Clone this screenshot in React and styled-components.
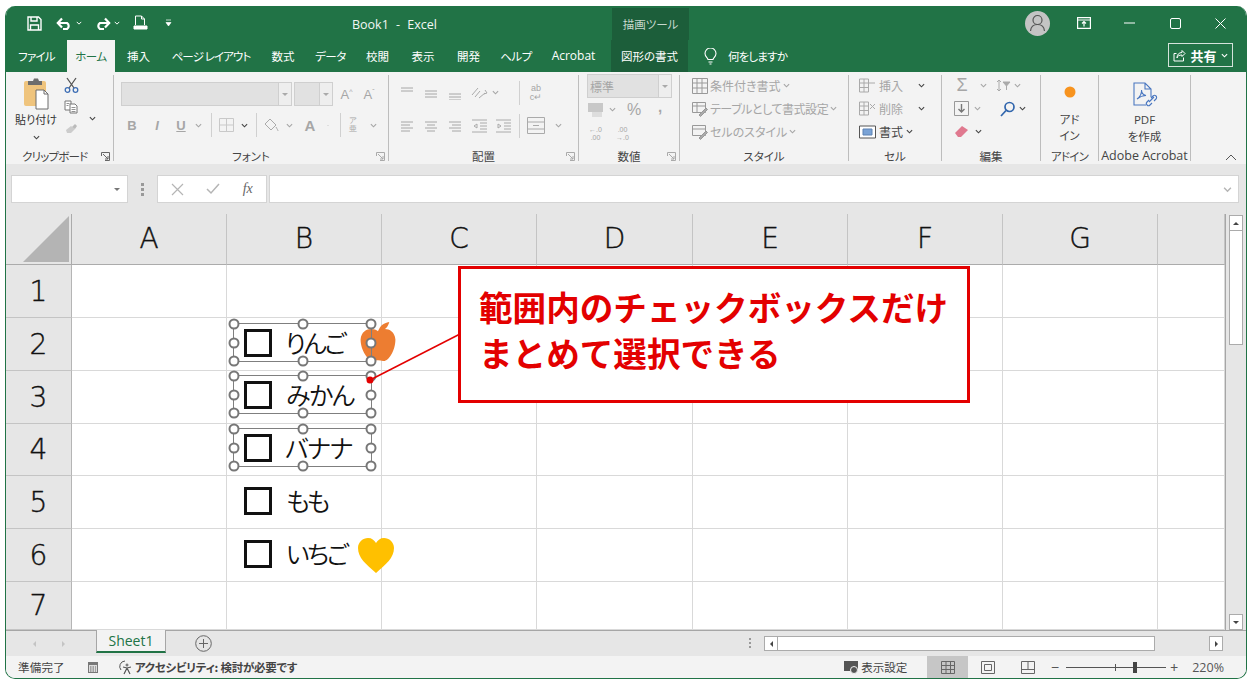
import styled, { createGlobalStyle } from 'styled-components';

const GlobalStyle = createGlobalStyle`
  html, body { margin: 0; padding: 0; background: #fff; }
  body { font-family: "Noto Sans CJK JP", "Liberation Sans", sans-serif; font-feature-settings: "palt"; }
  * { box-sizing: border-box; }
`;

const GREEN = '#217346';
const RED = '#e30000';

const Window = styled.div`
  width: 1242px;
  height: 673px;
  margin: 6px 0 0 5px;
  border-radius: 10px;
  overflow: hidden;
  display: flex;
  flex-direction: column;
  border: 1px solid ${GREEN};
  border-top: none;
  position: relative;
`;

const TitleBar = styled.div`
  height: 34px;
  background: ${GREEN};
  color: #fff;
  display: flex;
  align-items: center;
  font-size: 12px;
  flex: none;
`;

const Qat = styled.div`
  display: flex;
  align-items: center;
  width: 346px;
  padding-left: 21px;
  gap: 0;
`;

const QatSlot = styled.span`
  display: flex;
  align-items: center;
  width: ${p => p.$w}px;
`;

const DocTitle = styled.div`
  width: 260px;
  padding-top: 3px;
  font-family: "Open Sans", "Liberation Sans", sans-serif;
  font-size: 12.5px;
  word-spacing: 4px;
  color: #f2f7f4;
`;

const ToolContext = styled.div`
  width: 77px;
  height: 32px;
  margin-top: 2px;
  background: #1c5e3a;
  color: #c7d8ce;
  font-size: 11.5px;
  display: flex;
  align-items: center;
  justify-content: center;
`;

const WinControls = styled.div`
  display: flex;
  align-items: center;
  margin-left: auto;
  padding-right: 0;
`;

const Avatar = styled.div`
  width: 25px;
  height: 25px;
  border-radius: 50%;
  background: #c4c4c4;
  display: flex;
  align-items: center;
  justify-content: center;
  margin-right: 15px;
`;

const WinBtn = styled.span`
  display: flex;
  width: ${p => p.$w || 45}px;
  justify-content: center;
`;

const TabRow = styled.div`
  height: 32px;
  background: ${GREEN};
  color: #fff;
  display: flex;
  align-items: stretch;
  font-size: 11.5px;
  flex: none;
`;

const Tab = styled.div`
  width: ${p => p.$w}px;
  margin-left: ${p => p.$ml || 0}px;
  display: flex;
  align-items: center;
  justify-content: center;
  white-space: nowrap;
  letter-spacing: ${p => p.$ls || 0}px;
  background: ${p => p.$active ? '#f3f3f3' : p.$dark ? '#1c5e3a' : 'transparent'};
  color: ${p => p.$active ? GREEN : '#fff'};
  padding-bottom: ${p => p.$active ? 0 : 1}px;
`;

const AcrobatTab = styled(Tab)`
  font-family: "Open Sans", "Liberation Sans", sans-serif;
  font-size: 12px;
`;

const TellMe = styled.div`
  display: flex;
  align-items: center;
  margin-left: 16px;
  gap: 11px;
  font-size: 11.5px;
  letter-spacing: -0.8px;
`;

const ShareBtn = styled.div`
  margin-left: auto;
  margin-right: 13px;
  align-self: center;
  width: 65px;
  height: 24px;
  margin-top: -2px;
  border: 1px solid #d5e3db;
  display: flex;
  align-items: center;
  justify-content: center;
  gap: 4px;
  font-size: 13px;
  font-weight: 700;
`;

const Ribbon = styled.div`
  height: 92px;
  background: #f3f3f3;
  display: flex;
  flex: none;
  padding-top: 3px;
`;

const Group = styled.div`
  width: ${p => p.$w}px;
  height: 86px;
  border-right: ${p => p.$noline ? 'none' : '1px solid #bdbdbd'};
  display: flex;
  flex-direction: column;
  position: relative;
  flex: none;
`;

const GroupBody = styled.div`
  flex: 1;
  display: flex;
  min-height: 0;
  padding-left: ${p => p.$pl || 0}px;
  gap: ${p => p.$gap || 0}px;
`;

const GroupLabel = styled.div`
  height: 18px;
  margin-bottom: -4px;
  font-size: 11.5px;
  line-height: 18px;
  text-align: center;
  color: #444;
  white-space: nowrap;
  letter-spacing: ${p => p.$ls || 0}px;
`;

const ClipLabel = styled(GroupLabel)`
  text-align: left;
  padding-left: 16px;
`;

const Launcher = styled.svg`
  position: absolute;
  right: 3px;
  bottom: 0;
  width: 9px;
  height: 9px;
`;

const PasteCol = styled.div`
  width: 42px;
  margin-left: 9px;
  display: flex;
  flex-direction: column;
  align-items: center;
  font-size: 11px;
  color: #333;
  line-height: 14px;
  white-space: nowrap;
`;

const PasteIcon = styled.svg`
  margin: 3px 0 2px;
`;

const PasteChev = styled.span`
  margin-top: 3px;
`;

const ClipCol = styled.div`
  width: 22px;
  margin-left: 3px;
  display: flex;
  flex-direction: column;
  align-items: center;
  gap: 7px;
  padding-top: 2px;
`;

const ClipChev = styled.span`
  margin: 28px 0 0 7px;
`;

const Stack = styled.div`
  display: flex;
  flex-direction: column;
  gap: ${p => p.$gap || 0}px;
  padding-top: ${p => p.$pt || 0}px;
  margin-top: ${p => p.$mt || 0}px;
`;

const Row = styled.div`
  display: flex;
  align-items: center;
  height: ${p => p.$h || 23}px;
  gap: ${p => p.$gap || 0}px;
  padding-left: ${p => p.$pl || 0}px;
  color: ${p => p.$dark ? '#444' : '#a6a6a6'};
  font-size: 12px;
  white-space: nowrap;
`;

const Cell = styled.span`
  display: flex;
  align-items: center;
  justify-content: center;
  flex: none;
  width: ${p => p.$w}px;
`;

const Gap = styled.span`
  width: ${p => p.$w}px;
  flex: none;
`;

const Combo = styled.div`
  width: ${p => p.$w}px;
  height: 24px;
  background: #e1e1e1;
  border: 1px solid #cfcfcf;
  display: flex;
  align-items: center;
  justify-content: flex-end;
  margin-right: ${p => p.$mr || 0}px;
  margin-top: ${p => p.$mt || 0}px;
  color: #a6a6a6;
  font-size: 12px;
  flex: none;
`;

const ComboText = styled.span`
  margin-right: auto;
  padding-left: 2px;
`;

const ComboArrow = styled.span`
  width: 13px;
  height: 100%;
  border-left: 1px solid #cfcfcf;
  background: #eee;
  display: flex;
  align-items: center;
  justify-content: center;
`;

const VLine = styled.span`
  width: 1px;
  height: 24px;
  background: #d0d0d0;
  flex: none;
`;

const FontBtn = styled.span`
  width: ${p => p.$w}px;
  flex: none;
  text-align: center;
  color: #a6a6a6;
  font-family: "Liberation Sans", sans-serif;
  font-size: ${p => p.$size || 13}px;
  line-height: ${p => p.$lh ? `${p.$lh}px` : 'normal'};
  font-weight: ${p => p.$bold ? 700 : 400};
  font-style: ${p => p.$italic ? 'italic' : 'normal'};
  text-decoration: ${p => p.$under ? 'underline' : 'none'};
  margin-left: ${p => p.$ml || 0}px;
  margin-top: ${p => p.$mt || 0}px;
`;

const Caret = styled.sup`
  font-size: 7px;
`;

const TallBtn = styled.div`
  width: ${p => p.$w}px;
  display: flex;
  flex-direction: column;
  align-items: center;
  padding-top: ${p => p.$pt || 0}px;
  font-size: 11.5px;
  line-height: 16px;
  color: #444;
  text-align: center;
`;

const AddinDot = styled.svg`
  margin-bottom: 13px;
`;

const PdfIcon = styled.svg`
  margin-bottom: 3px;
`;

const PdfText = styled.span`
  font-family: "Open Sans", "Liberation Sans", sans-serif;
  font-size: 11.5px;
`;

const AcrobatLabel = styled(GroupLabel)`
  font-family: "Open Sans", "Liberation Sans", sans-serif;
  font-size: 12.5px;
`;

const Tight = styled.span`
  letter-spacing: -0.45px;
`;

const CollapseWrap = styled.div`
  flex: 1;
  display: flex;
  align-items: flex-end;
  justify-content: flex-end;
  padding: 0 9px 0 0;
  height: 86px;
`;

const FormulaBar = styled.div`
  height: 50px;
  background: #e6e6e6;
  display: flex;
  align-items: flex-start;
  padding: 11px 0 0 5px;
  flex: none;
`;

const NameBox = styled.div`
  width: 117px;
  height: 28px;
  background: #fff;
  border: 1px solid #d4d4d4;
  display: flex;
  align-items: center;
  justify-content: flex-end;
  padding-right: 6px;
`;

const Dots = styled.div`
  width: 29px;
  height: 28px;
  display: flex;
  align-items: center;
  justify-content: center;
`;

const FxBox = styled.div`
  width: 110px;
  height: 28px;
  background: #fff;
  border: 1px solid #d4d4d4;
  display: flex;
  align-items: center;
  justify-content: space-around;
  padding: 0 2px;
  margin-right: 2px;
`;

const FxText = styled.span`
  font-family: "Liberation Serif", serif;
  font-style: italic;
  font-size: 14px;
  color: #666;
`;

const FormulaInput = styled.div`
  width: 970px;
  height: 28px;
  background: #fff;
  border: 1px solid #d4d4d4;
  display: flex;
  align-items: center;
  justify-content: flex-end;
  padding-right: 6px;
`;

const SheetWrap = styled.div`
  display: flex;
  height: 417px;
  flex: none;
  border-bottom: 1px solid #a6a6a6;
`;

const Sheet = styled.div`
  position: relative;
  width: 1219px;
  display: grid;
  grid-template-columns: 66px 155px 155px 155px 156px 155px 155px 155px 67px;
  grid-template-rows: 51px 53px 53px 53px 52px 53px 53px 48px;
  background: #fff;
  overflow: hidden;
`;

const Corner = styled.div`
  background: #e6e6e6;
  border-right: 1px solid #ababab;
  border-bottom: 1px solid #ababab;
  display: flex;
  align-items: flex-end;
  justify-content: flex-end;
  padding: 0 2px 2px 0;
`;

const ColHead = styled.div`
  background: #e6e6e6;
  border-right: 1px solid #c4c4c4;
  border-bottom: 1px solid #ababab;
  display: flex;
  align-items: center;
  justify-content: center;
  padding-bottom: 2px;
  font-family: "DejaVu Sans", sans-serif;
  font-weight: 200;
  font-size: 28px;
  color: #111;
  -webkit-text-stroke: 0.4px #111;
`;

const RowHead = styled.div`
  background: #e6e6e6;
  border-right: 1px solid #b5b5b5;
  border-bottom: 1px solid #c4c4c4;
  display: flex;
  align-items: center;
  justify-content: center;
  font-family: "DejaVu Sans", sans-serif;
  font-weight: 200;
  font-size: 28px;
  color: #111;
  -webkit-text-stroke: 0.4px #111;
`;

const GridCell = styled.div`
  border-right: 1px solid #d9d9d9;
  border-bottom: 1px solid #d9d9d9;
`;

const CheckItem = styled.div`
  position: absolute;
  left: 238px;
  top: ${p => p.$top}px;
  display: flex;
  align-items: center;
  height: 28px;
  font-size: 25px;
  letter-spacing: ${p => p.$ls || 0}px;
  color: #111;
  white-space: nowrap;
  font-weight: 350;
  padding-bottom: 2px;
`;

const CheckBox = styled.span`
  width: 28px;
  height: 28px;
  margin-bottom: -2px;
  border: 3px solid #111;
  margin-right: ${p => p.$gap || 13}px;
  flex: none;
`;

const Selection = styled.div`
  position: absolute;
  left: 227px;
  top: ${p => p.$top}px;
  width: 139px;
  height: 39px;
  border: 1px solid #7f7f7f;
`;

const Handle = styled.span`
  position: absolute;
  width: 11px;
  height: 11px;
  border-radius: 50%;
  background: #fff;
  border: 2px solid #777;
  left: ${p => p.$x}%;
  top: ${p => p.$y}%;
  transform: translate(-50%, -50%);
`;

const Floating = styled.svg`
  position: absolute;
  left: ${p => p.$x}px;
  top: ${p => p.$y}px;
`;

const Callout = styled.div`
  position: absolute;
  left: 452px;
  top: 52px;
  width: 512px;
  height: 137px;
  background: #fff;
  border: 3px solid ${RED};
  color: ${RED};
  font-size: 33.6px;
  font-weight: 700;
  line-height: 46px;
  padding: 15px 0 0 18px;
  font-feature-settings: normal;
  white-space: nowrap;
`;

const ScrollCol = styled.div`
  width: 21px;
  background: #e6e6e6;
  border-left: 1px solid #a6a6a6;
  display: flex;
  flex-direction: column;
  align-items: center;
  padding-top: 1px;
`;

const ScrollBtn = styled.div`
  width: 14px;
  height: 16px;
  background: #fff;
  border: 1px solid #ababab;
  display: flex;
  align-items: center;
  justify-content: center;
  flex: none;
  margin-top: ${p => p.$auto ? 'auto' : 0};
`;

const ScrollThumb = styled.div`
  width: 14px;
  height: 114px;
  background: #fff;
  border: 1px solid #ababab;
  border-top: none;
`;

const TabStrip = styled.div`
  height: 25px;
  background: #e6e6e6;
  display: flex;
  align-items: flex-start;
  flex: none;
`;

const TabNav = styled.div`
  width: 90px;
  height: 25px;
  display: flex;
  align-items: center;
  gap: 21px;
  padding-left: 24px;
`;

const SheetTab = styled.div`
  width: 70px;
  height: 23px;
  margin-top: -1px;
  background: #f3f3f3;
  border: 1px solid #a6a6a6;
  border-top: none;
  border-bottom: 2px solid ${GREEN};
  color: ${GREEN};
  font-family: "Open Sans", "Liberation Sans", sans-serif;
  font-size: 14px;
  display: flex;
  align-items: center;
  justify-content: center;
`;

const AddSheet = styled.div`
  margin-left: 29px;
  height: 25px;
  display: flex;
  align-items: center;
`;

const HScroll = styled.div`
  margin-left: auto;
  height: 25px;
  display: flex;
  align-items: center;
  padding-right: 23px;
`;

const Grip = styled.div`
  width: 16px;
  display: flex;
  justify-content: center;
  margin-right: 6px;
`;

const HBtn = styled.div`
  width: 14px;
  height: 15px;
  background: #fff;
  border: 1px solid #ababab;
  display: flex;
  align-items: center;
  justify-content: center;
`;

const HThumb = styled.div`
  width: 377px;
  height: 15px;
  background: #fff;
  border: 1px solid #ababab;
  border-left: none;
  margin-right: 54px;
`;

const StatusBar = styled.div`
  flex: 1;
  background: #f3f3f3;
  display: flex;
  align-items: center;
  font-size: 11.5px;
  color: #444;
  padding-left: 12px;
`;

const StatusText = styled.span`
  font-weight: ${p => p.$bold ? 700 : 400};
  margin-left: ${p => p.$ml || 0}px;
  letter-spacing: ${p => p.$ls || 0}px;
  white-space: nowrap;
`;

const StatusRight = styled.div`
  margin-left: auto;
  display: flex;
  align-items: center;
  height: 100%;
`;

const ViewBtn = styled.div`
  width: ${p => p.$w || 40}px;
  height: 100%;
  display: flex;
  align-items: center;
  justify-content: center;
  background: ${p => p.$on ? '#c6c6c6' : 'transparent'};
`;

const ZoomBar = styled.div`
  width: 100px;
  height: 1px;
  background: #555;
  position: relative;
  margin: 0 1px 0 4px;
`;

const ZoomTick = styled.span`
  position: absolute;
  left: 49px;
  top: -3px;
  width: 1px;
  height: 7px;
  background: #555;
`;

const ZoomThumb = styled.span`
  position: absolute;
  left: 67px;
  top: -5px;
  width: 4px;
  height: 11px;
  background: #444;
`;

const ZoomSign = styled.span`
  width: 14px;
  margin-left: ${p => p.$ml || 0}px;
  text-align: center;
  font-size: 14px;
  color: #555;
`;

const ZoomValue = styled.span`
  font-family: "Open Sans", "Liberation Sans", sans-serif;
  font-size: 12.5px;
  color: #555;
  margin: 0 22px 0 11px;
`;

const Icon = styled.svg`
  margin-left: ${p => p.$ml || 0}px;
  margin-right: ${p => p.$mr || 0}px;
  flex: none;
`;

const Chev = ({ c = '#a6a6a6', s = 7 }) => (
  <svg width={s} height={s} viewBox="0 0 8 8" fill="none" stroke={c} strokeWidth="1.3"><path d="M1 2.5 4 5.5 7 2.5" /></svg>
);

const DarkChev = () => <Chev c="#444" />;

const Tri = ({ dir = 'down', c = '#444' }) => {
  const d = { down: 'M1 3h6L4 6z', up: 'M1 6h6L4 3z', right: 'M3 1v6l3-3z', left: 'M6 1v6L3 4z' }[dir];
  return <svg width="8" height="8" viewBox="0 0 8 8"><path d={d} fill={c} /></svg>;
};

const Lines = ({ rows }) => (
  <svg width="14" height="14" viewBox="0 0 14 14" stroke="#a6a6a6" strokeWidth="1" fill="none">
    {rows.map((r, i) => <path key={i} d={`M${r[0]} ${r[2]}H${r[1]}`} />)}
  </svg>
);

const LaunchIcon = ({ c = '#aaa' }) => (
  <Launcher viewBox="0 0 9 9" fill="none" stroke={c}><path d="M.5 4V.5H8.500V8.500H4M2 2l5 5M7 4v3H4" /></Launcher>
);

const App = () => {
  const cols = ['A', 'B', 'C', 'D', 'E', 'F', 'G', ''];
  const rows = [1, 2, 3, 4, 5, 6, 7];
  const handles = [[0, 0], [50, 0], [100, 0], [0, 50], [100, 50], [0, 100], [50, 100], [100, 100]];

  return (
    <>
      <GlobalStyle />
      <Window>
        <TitleBar>
          <Qat>
            <QatSlot $w={29}>
              <svg width="15" height="15" viewBox="0 0 15 15" fill="none" stroke="#fff" strokeWidth="1.4"><path d="M1 1h10.5L14 3.5V14H1z" /><path d="M4 1v4h6V1M3.5 14V9h8v5" /></svg>
            </QatSlot>
            <QatSlot $w={38}>
              <Icon $mr={3} width="17" height="13" viewBox="0 0 17 13" fill="none" stroke="#fff" strokeWidth="2.2"><path d="M2 6h9a3.5 3.5 0 0 1 0 6H7" /><path d="M6 1.5 1.8 6 6 10.5" /></Icon>
              <Chev c="#fff" s={6} />
            </QatSlot>
            <QatSlot $w={39}>
              <Icon $mr={3} width="17" height="13" viewBox="0 0 17 13" fill="none" stroke="#fff" strokeWidth="2.2"><path d="M15 6H6a3.5 3.5 0 0 0 0 6h4" /><path d="M11 1.5 15.2 6 11 10.5" /></Icon>
              <Chev c="#fff" s={6} />
            </QatSlot>
            <QatSlot $w={32}>
              <svg width="15" height="16" viewBox="0 0 15 16" fill="none" stroke="#fff" strokeWidth="1"><path d="M2.5 10V1h6l3 3v6M8.5 1v3h3" /><path d="M1 11h13v3H1z" fill="#fff" /></svg>
            </QatSlot>
            <QatSlot $w={10}>
              <svg width="7" height="8" viewBox="0 0 7 8"><path d="M1 1h5M1 3.5h5L3.500 7z" stroke="#fff" fill="#fff" strokeWidth=".7" /></svg>
            </QatSlot>
          </Qat>
          <DocTitle>Book1 - Excel</DocTitle>
          <ToolContext>描画ツール</ToolContext>
          <WinControls>
            <Avatar>
              <svg width="17" height="18" viewBox="0 0 17 18" fill="none" stroke="#555" strokeWidth="1.2"><circle cx="8.500" cy="6" r="4.500" /><path d="M1.500 17c.5-5 3-6.500 7-6.500s6.500 1.500 7 6.500" /></svg>
            </Avatar>
            <WinBtn $w={38}>
              <svg width="14" height="12" viewBox="0 0 14 12" fill="none" stroke="#fff" strokeWidth="1.2"><path d="M.6.600h12.800v10.800H.6zM.6 3h12.800" /><path d="M7 9.500V5M5 6.500 7 4.500l2 2" /></svg>
            </WinBtn>
            <WinBtn $w={53}>
              <svg width="11" height="2" viewBox="0 0 11 2"><path d="M0 1h11" stroke="#fff" strokeWidth="1" /></svg>
            </WinBtn>
            <WinBtn $w={39}>
              <svg width="11" height="11" viewBox="0 0 11 11" fill="none" stroke="#fff" strokeWidth="1"><rect x=".5" y=".5" width="10" height="10" rx="1.500" /></svg>
            </WinBtn>
            <WinBtn $w={51}>
              <svg width="11" height="11" viewBox="0 0 11 11" stroke="#fff" strokeWidth="1"><path d="M.5.500l10 10M10.500.500l-10 10" /></svg>
            </WinBtn>
          </WinControls>
        </TitleBar>

        <TabRow>
          <Tab $w={61} $ls={-0.8}>ファイル</Tab>
          <Tab $w={48} $active $ls={-0.4}>ホーム</Tab>
          <Tab $w={47}>挿入</Tab>
          <Tab $w={98} $ls={-0.9}>ページ レイアウト</Tab>
          <Tab $w={46}>数式</Tab>
          <Tab $w={49} $ls={-0.4}>データ</Tab>
          <Tab $w={45}>校閲</Tab>
          <Tab $w={46}>表示</Tab>
          <Tab $w={45}>開発</Tab>
          <Tab $w={50} $ls={-0.4}>ヘルプ</Tab>
          <AcrobatTab $w={65}>Acrobat</AcrobatTab>
          <Tab $w={77} $ml={5} $dark>図形の書式</Tab>
          <TellMe>
            <svg width="13" height="17" viewBox="0 0 13 17" fill="none" stroke="#fff" strokeWidth="1.1"><path d="M4 11.500C3.500 9.500 1 8.500 1 5.500a5.500 5.500 0 0 1 11 0c0 3-2.500 4-3 6zM4.500 14h4M5.500 16h2" /></svg>
            <span>何をしますか</span>
          </TellMe>
          <ShareBtn>
            <svg width="13" height="13" viewBox="0 0 13 13" fill="none" stroke="#fff" strokeWidth="1"><path d="M9 1.500 12 4.500 9 7.500V6C6 6 4.500 7 4 9c0-3.500 2-5.500 5-5.500zM10.500 8.500V12H1V4.500h2.500" /></svg>
            <span>共有</span>
            <Chev c="#fff" s={7} />
          </ShareBtn>
        </TabRow>

        <Ribbon>
          <Group $w={108}>
            <GroupBody>
              <PasteCol>
                <PasteIcon width="26" height="32" viewBox="0 0 26 32">
                  <rect x="1" y="3" width="22" height="25" rx="2" fill="#efc47d" />
                  <path d="M7 3h3l1-2.500h4L16 3h3v4H5V3z" fill="#6d6d6d" />
                  <path d="M13 12h8l4 4v15H13z" fill="#fff" stroke="#6d6d6d" />
                  <path d="M21 12v4h4" fill="none" stroke="#6d6d6d" />
                </PasteIcon>
                <span>貼り付け</span>
                <PasteChev><DarkChev /></PasteChev>
              </PasteCol>
              <ClipCol>
                <svg width="15" height="16" viewBox="0 0 15 16" fill="none" strokeWidth="1.3"><path d="M3 1l7 10M12 1 5 11" stroke="#555" /><circle cx="3.500" cy="13" r="2.300" stroke="#3f6fb5" /><circle cx="11.500" cy="13" r="2.300" stroke="#3f6fb5" /></svg>
                <svg width="14" height="14" viewBox="0 0 14 14" fill="#fff" stroke="#777" strokeWidth="1"><path d="M1 1h6v9H1z" /><path d="M6 4h5l2 2v7H6z" /><path d="M2.500 3.500h3M2.500 5.500h2M7.500 7.500h4M7.500 9.500h4M7.500 11.500h4" strokeWidth=".8" /></svg>
                <svg width="14" height="14" viewBox="0 0 14 14"><path d="M2 9l5-4 4 3-4 4H3z" fill="#ccc" /><path d="M8 6l3-3 2 2-2 3z" fill="#bbb" /></svg>
              </ClipCol>
              <ClipChev><DarkChev /></ClipChev>
            </GroupBody>
            <ClipLabel $ls={-0.8}>クリップボード</ClipLabel>
            <LaunchIcon c="#666" />
          </Group>

          <Group $w={275}>
            <GroupBody $pl={7}>
              <Stack $pt={7} $gap={7}>
                <Row $h={24}>
                  <Combo $w={171} $mr={2}><ComboArrow><Tri c="#aaa" /></ComboArrow></Combo>
                  <Combo $w={39}><ComboArrow><Tri c="#aaa" /></ComboArrow></Combo>
                  <FontBtn $w={25} $ml={1}>A<Caret>^</Caret></FontBtn>
                  <FontBtn $w={20}>A<Caret>ˇ</Caret></FontBtn>
                </Row>
                <Row $h={24}>
                  <FontBtn $w={22} $bold>B</FontBtn>
                  <FontBtn $w={28} $italic $bold>I</FontBtn>
                  <FontBtn $w={20} $bold $under>U</FontBtn>
                  <Cell $w={14}><Chev /></Cell>
                  <Gap $w={6} />
                  <VLine />
                  <Cell $w={28}><svg width="15" height="14" viewBox="0 0 15 14" fill="none" stroke="#c9c9c9"><path d="M.5.500h14v13H.5zM7.500.500v13M.5 7h14" /></svg></Cell>
                  <Cell $w={8}><DarkChev /></Cell>
                  <Gap $w={8} />
                  <VLine />
                  <Cell $w={28}><svg width="16" height="15" viewBox="0 0 16 15" fill="none" stroke="#aaa"><path d="M7 1l6 6-5 5-6-6zM13 9c1 2 2 3 2 4" /></svg></Cell>
                  <Cell $w={8}><Chev /></Cell>
                  <FontBtn $w={34} $bold $size={15}>A</FontBtn>
                  <Cell $w={2}><Chev /></Cell>
                  <Gap $w={11} />
                  <VLine />
                  <FontBtn $w={24} $size={8} $lh={8}>ア<br />亜</FontBtn>
                  <Cell $w={16}><Chev /></Cell>
                </Row>
              </Stack>
            </GroupBody>
            <GroupLabel>フォント</GroupLabel>
            <LaunchIcon />
          </Group>

          <Group $w={190}>
            <GroupBody $pl={6}>
              <Stack $pt={6} $gap={10}>
                <Row>
                  <Cell $w={24}><Lines rows={[[1, 13, 2], [1, 13, 5]]} /></Cell>
                  <Cell $w={24}><Lines rows={[[1, 13, 5], [1, 13, 8], [1, 13, 11]]} /></Cell>
                  <Cell $w={24}><Lines rows={[[1, 13, 8], [1, 13, 11], [1, 13, 14]]} /></Cell>
                  <Cell $w={24}><svg width="18" height="14" viewBox="0 0 18 14" fill="none" stroke="#aaa" strokeWidth="1"><path d="M2 9l6-7M5 11l5-6M9 12l6-5M15 4l2 3-3 1" /></svg></Cell>
                  <Cell $w={8}><Chev /></Cell>
                  <Gap $w={20} />
                  <VLine />
                  <FontBtn $w={32} $size={9} $lh={9}>ab<br />c↵</FontBtn>
                </Row>
                <Row>
                  <Cell $w={24}><Lines rows={[[1, 13, 3], [1, 10, 6], [1, 13, 9], [1, 10, 12]]} /></Cell>
                  <Cell $w={24}><Lines rows={[[1, 13, 3], [3, 11, 6], [1, 13, 9], [3, 11, 12]]} /></Cell>
                  <Cell $w={24}><Lines rows={[[1, 13, 3], [4, 13, 6], [1, 13, 9], [4, 13, 12]]} /></Cell>
                  <Cell $w={24}><svg width="15" height="14" viewBox="0 0 15 14" fill="none" stroke="#aaa"><path d="M0 1h15M8 4h7M8 7h7M8 10h7M0 13h15M5 5 2 7l3 2z" /></svg></Cell>
                  <Cell $w={24}><svg width="15" height="14" viewBox="0 0 15 14" fill="none" stroke="#aaa"><path d="M0 1h15M8 4h7M8 7h7M8 10h7M0 13h15M2 5l3 2-3 2z" /></svg></Cell>
                  <Gap $w={4} />
                  <VLine />
                  <Cell $w={32}><svg width="18" height="17" viewBox="0 0 18 17" fill="none" stroke="#aaa"><path d="M.5.500h17v16H.5zM.5 5h17M.5 12h17M6 8.500h6" /></svg></Cell>
                  <Cell $w={12}><Chev /></Cell>
                </Row>
              </Stack>
            </GroupBody>
            <GroupLabel>配置</GroupLabel>
            <LaunchIcon />
          </Group>

          <Group $w={101}>
            <GroupBody $pl={8}>
              <Stack>
                <Combo $w={85} $mt={-1}><ComboText>標準</ComboText><ComboArrow><Tri c="#aaa" /></ComboArrow></Combo>
                <Row $h={23}>
                  <svg width="17" height="16" viewBox="0 0 17 16"><rect x="1" y="1" width="15" height="9" fill="#c8c8c8" /><rect x="5" y="10" width="10" height="5" fill="#ddd" /></svg>
                  <Cell $w={17}><Chev /></Cell>
                  <FontBtn $w={26} $size={16}>%</FontBtn>
                  <FontBtn $w={26} $bold $size={15} $mt={-6}>,</FontBtn>
                </Row>
                <Row $h={26} $gap={10}>
                  <FontBtn $w={17} $size={7} $lh={8}>←.0<br />.00</FontBtn>
                  <FontBtn $w={17} $size={7} $lh={8}>.00<br />→.0</FontBtn>
                </Row>
              </Stack>
            </GroupBody>
            <GroupLabel>数値</GroupLabel>
            <LaunchIcon />
          </Group>

          <Group $w={169}>
            <GroupBody $pl={12}>
              <Stack $mt={-1}>
                <Row $gap={2}>
                  <svg width="16" height="16" viewBox="0 0 16 16" fill="none" stroke="#999"><path d="M.5.500h15v15H.5zM5 .5v15M10 .5v15M.5 5h15M.5 10h15" /></svg>
                  <span>条件付き書式</span><Chev />
                </Row>
                <Row $gap={2}>
                  <svg width="16" height="16" viewBox="0 0 16 16" fill="none" stroke="#999"><path d="M.5 1.500h13v10H.5zM.5 5h13M5 1.500v10" /><path d="M7 14l7-7 1.500 1.500-7 7z" fill="#aaa" /></svg>
                  <Tight>テーブルとして書式設定</Tight><Chev />
                </Row>
                <Row $gap={2}>
                  <svg width="16" height="16" viewBox="0 0 16 16" fill="none" stroke="#999"><path d="M.5 1.500h13v10H.5zM.5 5h13" /><path d="M7 14l7-7 1.500 1.500-7 7z" fill="#aaa" /></svg>
                  <span>セルのスタイル</span><Chev />
                </Row>
              </Stack>
            </GroupBody>
            <GroupLabel>スタイル</GroupLabel>
          </Group>

          <Group $w={93}>
            <GroupBody $pl={10}>
              <Stack $mt={-1}>
                <Row $gap={3}>
                  <svg width="17" height="15" viewBox="0 0 17 15" fill="none" stroke="#aaa"><path d="M.5 1h9v13h-9zM.5 5h9M.5 9.500h9M5 1v13M10 5h6" /></svg>
                  <span>挿入</span><Gap $w={9} /><DarkChev />
                </Row>
                <Row $gap={3}>
                  <svg width="17" height="15" viewBox="0 0 17 15" fill="none" stroke="#aaa"><path d="M.5 1h9v13h-9zM.5 5h9M.5 9.500h9M5 1v13M11 3l5 5M16 3l-5 5" /></svg>
                  <span>削除</span><Gap $w={9} /><DarkChev />
                </Row>
                <Row $gap={3} $dark>
                  <svg width="17" height="15" viewBox="0 0 17 15" fill="#fff" stroke="#555"><path d="M.5 2h16v12H.5z" /><path d="M4 5h9v6H4z" fill="#7aa3d6" stroke="#5d82b3" /></svg>
                  <span>書式</span><Chev c="#444" />
                </Row>
              </Stack>
            </GroupBody>
            <GroupLabel>セル</GroupLabel>
          </Group>

          <Group $w={99}>
            <GroupBody $pl={12}>
              <Stack $mt={-1}>
                <Row>
                  <FontBtn $w={16} $size={18}>Σ</FontBtn>
                  <Cell $w={26}><Chev /></Cell>
                  <svg width="15" height="13" viewBox="0 0 15 13" fill="none" stroke="#aaa"><path d="M3 1v11M1 3l2-2 2 2M1 10l2 2 2-2" /><path d="M7 3h7l-3.500 4z" fill="#aaa" /><path d="M10.500 7v4" /></svg>
                  <Cell $w={12}><Chev /></Cell>
                </Row>
                <Row>
                  <svg width="15" height="15" viewBox="0 0 15 15" fill="none" stroke="#999"><path d="M.5.500h14v14H.5z" /><path d="M7.500 3v8M4.500 8l3 3 3-3" stroke="#777" strokeWidth="1.4" /></svg>
                  <Cell $w={17}><Chev /></Cell>
                  <Gap $w={14} />
                  <svg width="16" height="16" viewBox="0 0 16 16" fill="none" stroke="#3166ad" strokeWidth="1.7"><circle cx="9.500" cy="6" r="4.500" /><path d="M6 9.500 1 15" /></svg>
                  <Cell $w={12}><DarkChev /></Cell>
                </Row>
                <Row $gap={6}>
                  <svg width="15" height="13" viewBox="0 0 15 13"><path d="M1 8l7-7 6 4-7 7H4z" fill="#e0798f" /></svg>
                  <DarkChev />
                </Row>
              </Stack>
            </GroupBody>
            <GroupLabel>編集</GroupLabel>
          </Group>

          <Group $w={58}>
            <GroupBody>
              <TallBtn $w={57} $pt={11}>
                <AddinDot width="12" height="12" viewBox="0 0 12 12"><circle cx="6" cy="6" r="5.500" fill="#f7931e" /></AddinDot>
                <span>アド<br />イン</span>
              </TallBtn>
            </GroupBody>
            <GroupLabel $ls={-0.8}>アドイン</GroupLabel>
          </Group>

          <Group $w={92}>
            <GroupBody>
              <TallBtn $w={91} $pt={7}>
                <PdfIcon width="26" height="27" viewBox="0 0 26 27" fill="none" stroke="#4a77c0" strokeWidth="1.1">
                  <path d="M14 23H2V1h11l6 6v8M13 1v6h6" />
                  <path d="M5 17c3-2 5-6 4.500-9 0 3 2 5 4.500 5.500-3 0-6 1-9 3.500z" />
                  <path d="M17 20l5-5M19 16l2-2a2 2 0 0 1 3 3l-2 2M20 21l-2 2a2 2 0 0 1-3-3l2-2" />
                </PdfIcon>
                <PdfText>PDF</PdfText>
                <span>を作成</span>
              </TallBtn>
            </GroupBody>
            <AcrobatLabel>Adobe Acrobat</AcrobatLabel>
          </Group>

          <CollapseWrap>
            <svg width="12" height="7" viewBox="0 0 12 7" fill="none" stroke="#555"><path d="M1 6l5-5 5 5" /></svg>
          </CollapseWrap>
        </Ribbon>

        <FormulaBar>
          <NameBox><Tri c="#777" /></NameBox>
          <Dots><svg width="3" height="13" viewBox="0 0 3 13" fill="#999"><rect width="3" height="3" /><rect y="5" width="3" height="3" /><rect y="10" width="3" height="3" /></svg></Dots>
          <FxBox>
            <svg width="13" height="13" viewBox="0 0 13 13" stroke="#b5b5b5" strokeWidth="1.200"><path d="M1 1l11 11M12 1 1 12" /></svg>
            <svg width="14" height="12" viewBox="0 0 14 12" fill="none" stroke="#b5b5b5" strokeWidth="1.500"><path d="M1 6l4 4 8-9" /></svg>
            <FxText>fx</FxText>
          </FxBox>
          <FormulaInput><Chev c="#b5b5b5" s={9} /></FormulaInput>
        </FormulaBar>

        <SheetWrap>
          <Sheet>
            <Corner>
              <svg width="46" height="46" viewBox="0 0 46 46"><path d="M46 0v46H0z" fill="#b4b4b4" /></svg>
            </Corner>
            {cols.map((c, i) => <ColHead key={i}>{c}</ColHead>)}
            {rows.map(r => [
              <RowHead key={`h${r}`}>{r}</RowHead>,
              ...cols.map((c, i) => <GridCell key={`${r}-${i}`} />),
            ])}

            <Floating $x={351} $y={105} width="42" height="43" viewBox="0 0 34 42">
              <path d="M17 12c2-5 5-8 11-9-1 5-5 9-11 9z" fill="#ed7d31" />
              <path d="M17 12c5-4 16-3 17 8 0 11-7 22-12 21-3-1-7-1-9 0C8 42 0 31 0 20 1 9 12 8 17 12z" fill="#ed7d31" />
            </Floating>
            <Floating $x={352} $y={324} width="36" height="36" viewBox="0 0 36 36">
              <path d="M18 35C8 26 0 20 0 10 0 4 5 0 10 0c4 0 6 2 8 5 2-3 4-5 8-5 5 0 10 4 10 10 0 10-8 16-18 25z" fill="#ffc000" />
            </Floating>

            <CheckItem $top={115} $ls={-2.4}><CheckBox $gap={13} />りんご</CheckItem>
            <CheckItem $top={167} $ls={-1.4}><CheckBox $gap={14} />みかん</CheckItem>
            <CheckItem $top={220} $ls={-1.4}><CheckBox $gap={13} />バナナ</CheckItem>
            <CheckItem $top={273} $ls={-3}><CheckBox $gap={14} />もも</CheckItem>
            <CheckItem $top={326} $ls={-2.6}><CheckBox $gap={14} />いちご</CheckItem>

            {[109, 161, 214].map(t => (
              <Selection key={t} $top={t}>
                {handles.map(([x, y]) => <Handle key={`${x}${y}`} $x={x} $y={y} />)}
              </Selection>
            ))}

            <Floating $x={360} $y={119} width="95" height="52" viewBox="0 0 95 52">
              <path d="M4 47 94 1" stroke={RED} strokeWidth="1.500" fill="none" />
              <circle cx="4" cy="47" r="3.500" fill={RED} />
            </Floating>

            <Callout>
              範囲内のチェックボックスだけ<br />まとめて選択できる
            </Callout>
          </Sheet>
          <ScrollCol>
            <ScrollBtn><Tri dir="up" /></ScrollBtn>
            <ScrollThumb />
            <ScrollBtn $auto><Tri dir="down" /></ScrollBtn>
          </ScrollCol>
        </SheetWrap>

        <TabStrip>
          <TabNav><Tri dir="left" c="#c4c4c4" /><Tri dir="right" c="#c4c4c4" /></TabNav>
          <SheetTab>Sheet1</SheetTab>
          <AddSheet>
            <svg width="17" height="17" viewBox="0 0 17 17" fill="none" stroke="#666"><circle cx="8.500" cy="8.500" r="7.800" /><path d="M8.500 4v9M4 8.500h9" /></svg>
          </AddSheet>
          <HScroll>
            <Grip><svg width="3" height="11" viewBox="0 0 3 11" fill="#999"><rect width="2" height="2" /><rect y="4" width="2" height="2" /><rect y="8" width="2" height="2" /></svg></Grip>
            <HBtn><Tri dir="left" /></HBtn>
            <HThumb />
            <HBtn><Tri dir="right" /></HBtn>
          </HScroll>
        </TabStrip>

        <StatusBar>
          <StatusText $ls={0.2}>準備完了</StatusText>
          <Icon $ml={22} width="12" height="13" viewBox="0 0 12 13"><rect x="1" y="1" width="10" height="11" fill="#777" /><rect x="2" y="4" width="8" height="7" fill="#ddd" /><path d="M3 6h6M3 8h6M3 10h6" stroke="#666" strokeDasharray="1.500 1" /></Icon>
          <Icon $ml={18} width="16" height="15" viewBox="0 0 16 15" fill="none" stroke="#555"><path d="M8 1a5.500 5.500 0 0 0-4 9" /><circle cx="10" cy="5" r="1" /><path d="M6 7l4 1 4-1M10 8l-3 6M10 8l3 6" strokeWidth="1.200" /></Icon>
          <StatusText $bold $ml={2} $ls={-0.25}>アクセシビリティ: 検討が必要です</StatusText>
          <StatusRight>
            <Icon $mr={2} width="15" height="14" viewBox="0 0 15 14"><rect y="1" width="14" height="10" fill="#555" /><circle cx="10" cy="10" r="3.500" fill="#555" stroke="#f3f3f3" /></Icon>
            <StatusText>表示設定</StatusText>
            <Gap $w={20} />
            <ViewBtn $on $w={41}>
              <svg width="14" height="13" viewBox="0 0 14 13" fill="none" stroke="#666"><path d="M.5.500h13v12H.5zM5 .5v12M9.500.5v12M.5 4.500h13M.5 8.500h13" /></svg>
            </ViewBtn>
            <ViewBtn>
              <svg width="14" height="13" viewBox="0 0 14 13" fill="none" stroke="#666"><path d="M.5.500h13v12H.5zM3.500 3.500h7v6h-7z" /></svg>
            </ViewBtn>
            <ViewBtn $w={39}>
              <svg width="14" height="13" viewBox="0 0 14 13" fill="none" stroke="#666"><path d="M.5.500h13v12H.5zM.5 8.500h13M7 .5v8" /></svg>
            </ViewBtn>
            <ZoomSign $ml={1}>−</ZoomSign>
            <ZoomBar><ZoomTick /><ZoomThumb /></ZoomBar>
            <ZoomSign>+</ZoomSign>
            <ZoomValue>220%</ZoomValue>
          </StatusRight>
        </StatusBar>
      </Window>
    </>
  );
};

export default App;
